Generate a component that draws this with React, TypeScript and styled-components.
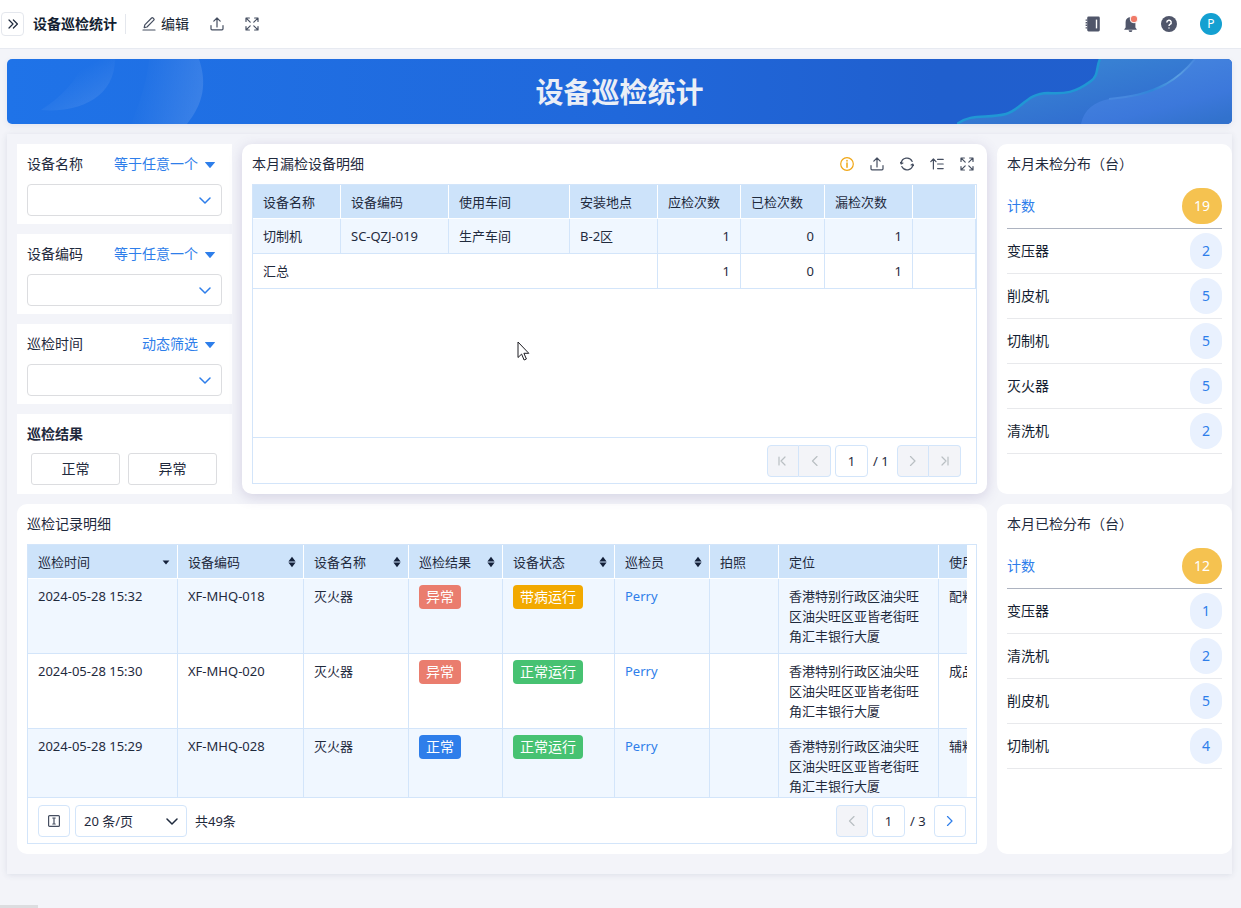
import React, { useState } from "react";
import styled, { createGlobalStyle, css } from "styled-components";

const blue = "#2e7eea";
const ink = "#1f2a3d";
const line = "#d3e5fa";

const GlobalStyle = createGlobalStyle`
  *, *::before, *::after { box-sizing: border-box; }
  body {
    margin: 0;
    background: #f3f4f9;
    color: ${ink};
    font-family: "Noto Sans", "Noto Sans CJK SC", sans-serif;
    font-size: 14px;
    line-height: 20px;
  }
  button, input, select { font: inherit; color: inherit; margin: 0; }
  button { padding: 0; cursor: pointer; }
  h1, h2, h3, ul { margin: 0; padding: 0; font-weight: 400; }
`;

/* ---------- icons ---------- */

const Svg = styled.svg`
  display: block;
  flex: none;
  fill: none;
  stroke: currentColor;
  stroke-width: 1.2;
  stroke-linecap: round;
  stroke-linejoin: round;
`;

const UploadIcon = () => (
  <Svg width="14" height="14" viewBox="0 0 14 14">
    <path d="M7 10V1.2M3.8 4.2L7 1l3.2 3.2M1 8.5v3.3a1 1 0 0 0 1 1h10a1 1 0 0 0 1-1V8.5" />
  </Svg>
);
const ExpandIcon = () => (
  <Svg width="14" height="14" viewBox="0 0 14 14">
    <path d="M1 4.4V1h3.4M1.4 1.4L5.2 5.2M9.6 1H13v3.4M12.6 1.4L8.8 5.2M1 9.6V13h3.4M1.4 12.6l3.8-3.8M13 9.6V13H9.6M12.6 12.6L8.8 8.8" />
  </Svg>
);
const PencilIcon = () => (
  <Svg width="14" height="14" viewBox="0 0 14 14">
    <path d="M1 13h12M2.2 10.6l.6-2.8L9.6 1a1 1 0 0 1 1.4 0l.8.8a1 1 0 0 1 0 1.4L5 10z" />
  </Svg>
);
const InfoIcon = () => (
  <Svg width="14" height="14" viewBox="0 0 14 14">
    <circle cx="7" cy="7" r="6.3" />
    <path d="M7 6v4.2M7 3.6v.4" strokeWidth="1.5" />
  </Svg>
);
const RefreshIcon = () => (
  <Svg width="14" height="14" viewBox="0 0 14 14">
    <path d="M1.2 6.4A5.8 5.8 0 0 1 12.2 4.400M12.800 7.600A5.8 5.8 0 0 1 1.800 9.600M.3 5.400l.9 1.500L2.900 6M13.700 8.600l-.9-1.500L11.100 8" />
  </Svg>
);
const OrderIcon = () => (
  <Svg width="14" height="14" viewBox="0 0 14 14">
    <path d="M3.4 12V2M.8 4.6L3.4 2 6 4.6M7.6 2.4h5.6M7.6 7h5.6M7.6 11.6h5.6" />
  </Svg>
);
const DoubleRight = () => (
  <Svg width="10" height="10" viewBox="0 0 10 10">
    <path d="M1 1l4 4-4 4M5.4 1l4 4-4 4" />
  </Svg>
);
const ChevronDown = () => (
  <Svg width="12" height="10" viewBox="0 -2 12 10">
    <path d="M1 1l5 5 5-5" />
  </Svg>
);
const CaretDown = () => (
  <svg width="10" height="8" viewBox="0 -2 10 8" fill="currentColor">
    <path d="M.4 0h9.2a.3.3 0 0 1 .3.5L5.4 5.8a.5.5 0 0 1-.8 0L.1.5A.3.3 0 0 1 .4 0z" />
  </svg>
);
const arrows = {
  first: "M1 1v8M7 1L3 5l4 4",
  prev: "M7 .5L2.500 5 7 9.5",
  next: "M2.5 .5L7 5 2.5 9.5",
  last: "M8 1v8M2 1l4 4-4 4",
};
const Arrow = ({ kind }: { kind: keyof typeof arrows }) => (
  <Svg width="10" height="10" viewBox="0 0 10 10">
    <path d={arrows[kind]} />
  </Svg>
);
const RowHeightIcon = () => (
  <Svg width="12" height="12" viewBox="0 0 12 12">
    <rect x=".6" y=".6" width="10.8" height="10.8" rx="1" />
    <path d="M6 3v6M4.8 3h2.4M4.8 9h2.4" />
  </Svg>
);
const SortIcon = ({ active }: { active?: boolean }) => (
  <svg width="8" height="12" viewBox="0 0 8 12" fill="#14213a">
    {active ? <path d="M.6 4.4h6.8L4 8.4z" /> : <path d="M.4 5.4L4 .8l3.600 4.600zM.4 6.600h7.200L4 11.200z" />}
  </svg>
);
const NotebookIcon = () => (
  <svg width="16" height="16" viewBox="0 0 16 16" fill="#50566a">
    <path d="M3.600.6h9.800A1.4 1.4 0 0 1 14.8 2v12a1.400 1.400 0 0 1-1.400 1.400H3.600A1.400 1.400 0 0 1 2.200 14V2A1.4 1.4 0 0 1 3.600.6z" />
    <path d="M.6 3.400h1.600v1.400H.6zM.6 6h1.600v1.400H.6zM.6 8.600h1.600V10H.6zM.6 11.200h1.600v1.400H.6z" />
    <path d="M10.800 3.600h1.400v8.800h-1.400z" fill="#fff" />
  </svg>
);
const BellIcon = () => (
  <svg width="16" height="18" viewBox="0 0 16 18">
    <path d="M7.500 2.200a4.800 4.800 0 0 1 4.900 4.900v5.500l1.300 1.600v.6H1.300v-.6l1.300-1.600V7.100a4.800 4.800 0 0 1 4.900-4.900zM5.600 15.200h3.800a1.900 1.900 0 0 1-3.800 0z" fill="#50566a" />
    <circle cx="11" cy="4" r="3.800" fill="#f07a68" stroke="#fff" strokeWidth="1" />
  </svg>
);
const HelpIcon = () => (
  <svg width="16" height="16" viewBox="0 0 16 16">
    <circle cx="8" cy="8" r="8" fill="#50566a" />
    <path d="M5.800 6.400a2.200 2.200 0 1 1 3.200 2c-.7.4-1 .7-1 1.500M8 11.500v.9" fill="none" stroke="#fff" strokeWidth="1.500" />
  </svg>
);

/* ---------- page ---------- */

const Page = styled.div`
  display: flex;
  flex-direction: column;
  min-height: 100vh;
`;
const TopBar = styled.header`
  display: flex;
  align-items: center;
  height: 49px;
  padding: 0 19px 0 1px;
  background: #fff;
  border-bottom: 1px solid #e7eaf1;
`;
const CollapseButton = styled.button`
  display: grid;
  place-items: center;
  width: 23px;
  height: 24px;
  border: 1px solid #e4e7ed;
  border-radius: 4px;
  background: #fff;
`;
const PageName = styled.h2`
  margin-left: 9px;
  padding-right: 8px;
  border-right: 1px solid #e4e7ed;
  font-size: 14px;
  font-weight: 600;
  color: #141e31;
`;
const PlainButton = styled.button<{ $tone?: string; $gap?: number }>`
  display: flex;
  align-items: center;
  gap: ${(p) => p.$gap ?? 5}px;
  border: 0;
  background: none;
  color: ${(p) => p.$tone ?? "#454e60"};
`;
const TopActions = styled.div`
  display: flex;
  align-items: center;
  gap: 21px;
  margin-left: 16px;
`;
const EditLabel = styled.span`
  color: #141e31;
`;
const Account = styled.nav`
  display: flex;
  align-items: center;
  gap: 22px;
  margin-left: auto;
`;
const Avatar = styled.button`
  width: 22px;
  height: 22px;
  margin-left: 1px;
  border: 0;
  border-radius: 11px;
  background: #14a0d1;
  color: #fff;
  font-size: 12px;
`;
const Main = styled.main`
  display: flex;
  flex-direction: column;
  gap: 10px;
  padding: 10px 9px 20px 7px;
`;
const Banner = styled.section`
  position: relative;
  display: grid;
  place-items: center;
  height: 65px;
  border-radius: 5px;
  overflow: hidden;
  background: linear-gradient(90deg, #1f73e8 0%, #2068db 50%, #205fce 76%, #215fcd 100%);
  box-shadow: 0 2px 6px rgba(60, 70, 110, 0.08);
`;
const BannerArt = styled.svg<{ $side: "left" | "right" }>`
  position: absolute;
  top: 0;
  ${(p) => p.$side}: 0;
`;
const BannerTitle = styled.h1`
  position: relative;
  font-size: 28px;
  line-height: 40px;
  font-weight: 700;
  color: #eaeef6;
`;
const Board = styled.div`
  display: grid;
  grid-template-columns: 215px minmax(0, 1fr) 235px;
  gap: 10px;
  padding: 10px 0 20px 10px;
  box-shadow: 0 1px 6px rgba(60, 70, 110, 0.12);
`;
const Filters = styled.div`
  display: flex;
  flex-direction: column;
  gap: 10px;
`;
const FilterCard = styled.section`
  display: flex;
  flex-direction: column;
  height: 80px;
  padding: 0 10px 8px;
  background: #fff;
`;
const FilterHead = styled.div<{ $bold?: boolean }>`
  flex: 1;
  display: flex;
  align-items: center;
  justify-content: space-between;
  padding-right: 7px;
  font-weight: ${(p) => (p.$bold ? 600 : 400)};
`;
const SelectWrap = styled.div<{ $small?: boolean }>`
  display: grid;
  align-items: center;
  color: ${(p) => (p.$small ? ink : blue)};
  > * { grid-area: 1 / 1; }
  > svg { justify-self: end; margin-right: ${(p) => (p.$small ? 9 : 11)}px; stroke-width: 1.5; pointer-events: none; }
`;
const Select = styled.select<{ $edge?: string }>`
  appearance: none;
  width: 100%;
  height: 32px;
  padding: 0 8px;
  border: 1px solid ${(p) => p.$edge ?? "#dcdde0"};
  border-radius: 4px;
  background: #fff;
  color: ${ink};
`;
const Choices = styled.div`
  display: grid;
  grid-template-columns: 1fr 1fr;
  gap: 8px;
  padding: 0 5px 1px 4px;
`;
const ChoiceButton = styled.button`
  height: 32px;
  border: 1px solid #dcdde0;
  border-radius: 3px;
  background: #fff;
`;
const Card = styled.section<{ $raised?: boolean; $wide?: boolean }>`
  display: flex;
  flex-direction: column;
  min-height: 350px;
  padding: 0 10px 10px;
  border-radius: 10px;
  background: #fff;
  ${(p) => p.$wide && css`grid-column: span 2;`}
  ${(p) => p.$raised && css`
    position: relative;
    box-shadow: 0 3px 14px rgba(84, 72, 140, 0.2);
  `}
`;
const CardHead = styled.header`
  display: flex;
  align-items: center;
  justify-content: space-between;
  height: 40px;
  padding-right: 3px;
`;
const CardTitle = styled.h3`
  font-size: 14px;
`;
const Tools = styled.div`
  display: flex;
  gap: 16px;
`;

/* ---------- tables ---------- */

const TableBox = styled.div`
  flex: 1;
  display: flex;
  flex-direction: column;
  border: 1px solid ${line};
`;
const Scroller = styled.div<{ $gutter?: boolean }>`
  height: 252px;
  overflow: auto;
  scrollbar-width: none;
  margin-right: ${(p) => (p.$gutter ? 9 : 0)}px;
`;
const Table = styled.table<{ $min?: number }>`
  width: 100%;
  min-width: ${(p) => p.$min ?? 0}px;
  table-layout: fixed;
  border-collapse: separate;
  border-spacing: 0;
  font-size: 13px;
`;
const Col = styled.col<{ $w?: number }>`
  width: ${(p) => (p.$w ? `${p.$w}px` : "auto")};
`;
const Th = styled.th`
  height: 34px;
  padding: 0 10px;
  border-right: 1px solid #fff;
  border-bottom: 1px solid #fff;
  background: #cde3fa;
  text-align: left;
  font-weight: 400;
  white-space: nowrap;
`;
const ThInner = styled.div`
  display: flex;
  align-items: center;
  justify-content: space-between;
  margin-right: -3px;
`;
const Tr = styled.tr<{ $tint?: boolean }>`
  background: ${(p) => (p.$tint ? "#f0f7ff" : "#fff")};
`;
const Td = styled.td<{ $num?: boolean; $snug?: boolean }>`
  padding: ${(p) => (p.$snug ? 6 : 7)}px 10px;
  border-right: 1px solid ${line};
  border-bottom: 1px solid ${line};
  text-align: ${(p) => (p.$num ? "right" : "left")};
  vertical-align: top;
`;
const Tag = styled.span<{ $bg: string }>`
  display: inline-block;
  height: 24px;
  padding: 0 7px;
  border-radius: 4px;
  background: ${(p) => p.$bg};
  color: #fff;
  font-size: 14px;
  line-height: 24px;
  vertical-align: top;
`;
const PersonLink = styled.a`
  color: ${blue};
  text-decoration: none;
`;
const Footer = styled.footer<{ $inset?: boolean }>`
  display: flex;
  align-items: center;
  gap: 5px;
  height: 46px;
  padding: 0 ${(p) => (p.$inset ? 15 : 10)}px 0 10px;
  border-top: 1px solid ${line};
  font-size: 13px;
`;
const Pager = styled.div`
  display: flex;
  align-items: center;
  margin-left: auto;
`;
const PageButton = styled.button<{ $tone?: string }>`
  display: grid;
  place-items: center;
  width: 32px;
  height: 32px;
  border: 1px solid ${line};
  border-radius: 4px;
  background: #fff;
  color: ${(p) => p.$tone ?? blue};
  &:disabled { background: #f3f4f8; color: #b9bfc3; cursor: default; }
`;
const Pair = styled.div`
  display: flex;
  > :first-child { border-radius: 4px 0 0 4px; }
  > :last-child { border-left: 0; border-radius: 0 4px 4px 0; }
`;
const PageInput = styled.input`
  width: 33px;
  height: 32px;
  margin: 0 5px 0 4px;
  padding: 0;
  border: 1px solid ${line};
  border-radius: 4px;
  background: #fff;
  text-align: center;
`;
const PageTotal = styled.span`
  min-width: 24px;
  white-space: nowrap;
`;
const PageSize = styled(SelectWrap)`
  width: 112px;
`;
const Total = styled.span`
  margin-left: 3px;
`;

/* ---------- count lists ---------- */

const CountList = styled.ul`
  list-style: none;
`;
const CountRow = styled.li<{ $lead?: boolean }>`
  display: flex;
  align-items: center;
  justify-content: space-between;
  height: 45px;
  border-bottom: 1px solid ${(p) => (p.$lead ? "#adb3c0" : "#e8e9ec")};
  color: ${(p) => (p.$lead ? blue : "#141e31")};
`;
const CountBadge = styled.span<{ $lead?: boolean }>`
  min-width: 32px;
  height: 36px;
  padding: 0 12px;
  border-radius: 18px;
  background: ${(p) => (p.$lead ? "#f5c250" : "#e9f1fe")};
  color: ${(p) => (p.$lead ? "#fff" : blue)};
  line-height: 36px;
`;
const Pointer = styled.svg`
  position: absolute;
  left: 275px;
  top: 197px;
`;
const ScrollThumb = styled.div`
  width: 38px;
  height: 3px;
  margin-top: auto;
  background: #dcdde0;
`;

/* ---------- data ---------- */

const missedCols = [
  { name: "设备名称", w: 88 },
  { name: "设备编码", w: 108 },
  { name: "使用车间", w: 121 },
  { name: "安装地点", w: 88 },
  { name: "应检次数", w: 83 },
  { name: "已检次数", w: 84 },
  { name: "漏检次数", w: 88 },
  { name: "" },
];
const recordCols: { name: string; w?: number; sort?: "both" | "down" }[] = [
  { name: "巡检时间", w: 150, sort: "down" },
  { name: "设备编码", w: 126, sort: "both" },
  { name: "设备名称", w: 105, sort: "both" },
  { name: "巡检结果", w: 94, sort: "both" },
  { name: "设备状态", w: 112, sort: "both" },
  { name: "巡检员", w: 95, sort: "both" },
  { name: "拍照", w: 69 },
  { name: "定位", w: 160 },
  { name: "使用车间" },
];
const tagColors: Record<string, string> = {
  异常: "#ea7d6e",
  正常: blue,
  带病运行: "#f2a900",
  正常运行: "#47c272",
};
const address = "香港特别行政区油尖旺区油尖旺区亚皆老街旺角汇丰银行大厦";
const records = [
  { time: "2024-05-28 15:32", code: "XF-MHQ-018", result: "异常", state: "带病运行", shop: "配料车间" },
  { time: "2024-05-28 15:30", code: "XF-MHQ-020", result: "异常", state: "正常运行", shop: "成品车间" },
  { time: "2024-05-28 15:29", code: "XF-MHQ-028", result: "正常", state: "正常运行", shop: "辅料车间" },
];
const unchecked: [string, number][] = [["计数", 19], ["变压器", 2], ["削皮机", 5], ["切制机", 5], ["灭火器", 5], ["清洗机", 2]];
const checked: [string, number][] = [["计数", 12], ["变压器", 1], ["清洗机", 2], ["削皮机", 5], ["切制机", 4]];

/* ---------- parts ---------- */

const Filter = ({ id, label, mode }: { id: string; label: string; mode: string }) => (
  <FilterCard>
    <FilterHead>
      <label htmlFor={id}>{label}</label>
      <PlainButton $tone={blue} $gap={7}>
        {mode}
        <CaretDown />
      </PlainButton>
    </FilterHead>
    <SelectWrap>
      <Select id={id} defaultValue="">
        <option value="" />
      </Select>
      <ChevronDown />
    </SelectWrap>
  </FilterCard>
);

const Counts = ({ title, rows }: { title: string; rows: [string, number][] }) => (
  <Card>
    <CardHead>
      <CardTitle>{title}</CardTitle>
    </CardHead>
    <CountList>
      {rows.map(([name, count], i) => (
        <CountRow key={name} $lead={i === 0}>
          {name}
          <CountBadge $lead={i === 0}>{count}</CountBadge>
        </CountRow>
      ))}
    </CountList>
  </Card>
);

const PageNumber = () => {
  const [page, setPage] = useState("1");
  return <PageInput aria-label="页码" value={page} onChange={(e) => setPage(e.target.value)} />;
};

export default function App() {
  return (
    <Page>
      <GlobalStyle />
      <TopBar>
        <CollapseButton aria-label="展开"><DoubleRight /></CollapseButton>
        <PageName>设备巡检统计</PageName>
        <TopActions>
          <PlainButton><PencilIcon /><EditLabel>编辑</EditLabel></PlainButton>
          <PlainButton aria-label="分享"><UploadIcon /></PlainButton>
          <PlainButton aria-label="全屏"><ExpandIcon /></PlainButton>
        </TopActions>
        <Account>
          <PlainButton aria-label="通讯录"><NotebookIcon /></PlainButton>
          <PlainButton aria-label="通知"><BellIcon /></PlainButton>
          <PlainButton aria-label="帮助"><HelpIcon /></PlainButton>
          <Avatar>P</Avatar>
        </Account>
      </TopBar>

      <Main>
        <Banner>
          <BannerArt $side="left" width="210" height="65" viewBox="0 0 210 65">
            <defs>
              <linearGradient id="leafA" x1="0.3" y1="0.2" x2="0.8" y2="0.8">
                <stop offset="0.2" stopColor="#fff" stopOpacity="0" />
                <stop offset="1" stopColor="#fff" stopOpacity="0.09" />
              </linearGradient>
              <linearGradient id="leafB" x1="0" y1="0.3" x2="1" y2="0.5">
                <stop offset="0.1" stopColor="#fff" stopOpacity="0" />
                <stop offset="1" stopColor="#fff" stopOpacity="0.12" />
              </linearGradient>
            </defs>
            <path d="M34 51C66 54 108 42 108 0H78C70 22 54 38 34 51z" fill="url(#leafA)" />
            <path d="M124 65C132 45 140 24 142 0h50c8 24 5 44-12 65z" fill="url(#leafB)" />
          </BannerArt>
          <BannerArt $side="right" width="275" height="65" viewBox="0 0 275 65">
            <defs>
              <linearGradient id="waveA" x1="0" y1="0" x2="1" y2="1">
                <stop offset="0.3" stopColor="#3880d3" />
                <stop offset="0.8" stopColor="#2f6bcf" />
              </linearGradient>
              <linearGradient id="waveB" x1="0.2" y1="0" x2="0.8" y2="1">
                <stop offset="0" stopColor="#4788df" />
                <stop offset="0.7" stopColor="#3c78db" />
                <stop offset="1" stopColor="#3272cd" />
              </linearGradient>
              <linearGradient id="edgeB" x1="0" y1="0" x2="1" y2="0">
                <stop offset="0.2" stopColor="#4788df" />
                <stop offset="0.5" stopColor="#2f86d8" />
                <stop offset="0.8" stopColor="#5a9fe2" />
                <stop offset="1" stopColor="#4788df" />
              </linearGradient>
            </defs>
            <path d="M0 65C14 54 30 60 49 55C64 51 70 34 91 34C108 35 118 34 134 22C142 16 139 8 143 0H275V65z" fill="url(#waveA)" />
            <path d="M0 65C14 54 30 60 49 55C64 51 70 34 91 34C108 35 118 34 134 22C142 16 139 8 143 0" fill="none" stroke="#2097d4" strokeWidth="2.5" />
            <path d="M124 65C127 50 138 43 152 40C174 38 190 35 209 25C223 17 230 10 238 0H275V65z" fill="url(#waveB)" />
            <path d="M152 40C174 38 190 35 209 25C223 17 230 10 238 0" fill="none" stroke="url(#edgeB)" strokeWidth="2" />
          </BannerArt>
          <BannerTitle>设备巡检统计</BannerTitle>
        </Banner>

        <Board>
          <Filters>
            <Filter id="f-name" label="设备名称" mode="等于任意一个" />
            <Filter id="f-code" label="设备编码" mode="等于任意一个" />
            <Filter id="f-time" label="巡检时间" mode="动态筛选" />
            <FilterCard>
              <FilterHead $bold>巡检结果</FilterHead>
              <Choices>
                <ChoiceButton>正常</ChoiceButton>
                <ChoiceButton>异常</ChoiceButton>
              </Choices>
            </FilterCard>
          </Filters>

          <Card $raised>
            <CardHead>
              <CardTitle>本月漏检设备明细</CardTitle>
              <Tools>
                <PlainButton aria-label="说明" $tone="#f0a615"><InfoIcon /></PlainButton>
                <PlainButton aria-label="导出"><UploadIcon /></PlainButton>
                <PlainButton aria-label="刷新"><RefreshIcon /></PlainButton>
                <PlainButton aria-label="排序"><OrderIcon /></PlainButton>
                <PlainButton aria-label="全屏"><ExpandIcon /></PlainButton>
              </Tools>
            </CardHead>
            <TableBox>
              <Scroller>
                <Table>
                  <colgroup>
                    {missedCols.map((c, i) => <Col key={i} $w={c.w} />)}
                  </colgroup>
                  <thead>
                    <tr>{missedCols.map((c, i) => <Th key={i}>{c.name}</Th>)}</tr>
                  </thead>
                  <tbody>
                    <Tr $tint>
                      <Td>切制机</Td>
                      <Td>SC-QZJ-019</Td>
                      <Td>生产车间</Td>
                      <Td>B-2区</Td>
                      <Td $num>1</Td>
                      <Td $num>0</Td>
                      <Td $num>1</Td>
                      <Td />
                    </Tr>
                    <Tr>
                      <Td colSpan={4}>汇总</Td>
                      <Td $num>1</Td>
                      <Td $num>0</Td>
                      <Td $num>1</Td>
                      <Td />
                    </Tr>
                  </tbody>
                </Table>
              </Scroller>
              <Footer $inset>
                <Pager>
                  <Pair>
                    <PageButton disabled aria-label="首页"><Arrow kind="first" /></PageButton>
                    <PageButton disabled aria-label="上一页"><Arrow kind="prev" /></PageButton>
                  </Pair>
                  <PageNumber />
                  <PageTotal>/ 1</PageTotal>
                  <Pair>
                    <PageButton disabled aria-label="下一页"><Arrow kind="next" /></PageButton>
                    <PageButton disabled aria-label="末页"><Arrow kind="last" /></PageButton>
                  </Pair>
                </Pager>
              </Footer>
            </TableBox>
            <Pointer width="14" height="22" viewBox="0 0 14 22">
              <path d="M1 1v15.500l3.600-3.400 2.500 5.900 2.300-1-2.500-5.700h4.900z" fill="#fff" stroke="#1c1c22" strokeWidth="1" />
            </Pointer>
          </Card>

          <Counts title="本月未检分布（台）" rows={unchecked} />

          <Card $wide>
            <CardHead>
              <CardTitle>巡检记录明细</CardTitle>
            </CardHead>
            <TableBox>
              <Scroller $gutter>
                <Table $min={1031}>
                  <colgroup>
                    {recordCols.map((c) => <Col key={c.name} $w={c.w} />)}
                  </colgroup>
                  <thead>
                    <tr>
                      {recordCols.map((c) => (
                        <Th key={c.name}>
                          <ThInner>
                            {c.name}
                            {c.sort && <SortIcon active={c.sort === "down"} />}
                          </ThInner>
                        </Th>
                      ))}
                    </tr>
                  </thead>
                  <tbody>
                    {records.map((r, i) => (
                      <Tr key={r.code} $tint={i % 2 === 0}>
                        <Td>{r.time}</Td>
                        <Td>{r.code}</Td>
                        <Td>灭火器</Td>
                        <Td $snug><Tag $bg={tagColors[r.result]}>{r.result}</Tag></Td>
                        <Td $snug><Tag $bg={tagColors[r.state]}>{r.state}</Tag></Td>
                        <Td><PersonLink href="#perry">Perry</PersonLink></Td>
                        <Td />
                        <Td>{address}</Td>
                        <Td>{r.shop}</Td>
                      </Tr>
                    ))}
                  </tbody>
                </Table>
              </Scroller>
              <Footer>
                <PageButton aria-label="行高" $tone="#454e60"><RowHeightIcon /></PageButton>
                <PageSize $small>
                  <Select aria-label="每页条数" $edge={line}>
                    <option>20 条/页</option>
                  </Select>
                  <ChevronDown />
                </PageSize>
                <Total>共49条</Total>
                <Pager>
                  <PageButton disabled aria-label="上一页"><Arrow kind="prev" /></PageButton>
                  <PageNumber />
                  <PageTotal>/ 3</PageTotal>
                  <PageButton aria-label="下一页"><Arrow kind="next" /></PageButton>
                </Pager>
              </Footer>
            </TableBox>
          </Card>

          <Counts title="本月已检分布（台）" rows={checked} />
        </Board>
      </Main>
      <ScrollThumb />
    </Page>
  );
}
